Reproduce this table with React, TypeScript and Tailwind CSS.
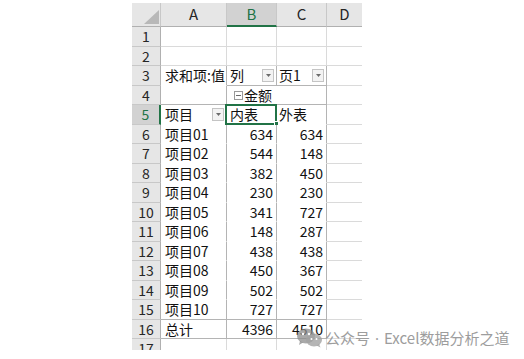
import type { ReactNode } from 'react'

const GRID = 'border-r border-b border-[#dadada]'
const PV_IN = 'border-r border-b border-r-[#b4b4b4] border-b-white'
const PV_BOT = 'border-r border-b border-r-[#b4b4b4] border-b-[#b4b4b4]'

type Row = {
  n: number
  h: string
  a?: ReactNode
  b?: ReactNode
  c?: ReactNode
  ca: string
  cb: string
  cc: string
}

const items: [string, number, number][] = [
  ['项目01', 634, 634],
  ['项目02', 544, 148],
  ['项目03', 382, 450],
  ['项目04', 230, 230],
  ['项目05', 341, 727],
  ['项目06', 148, 287],
  ['项目07', 438, 438],
  ['项目08', 450, 367],
  ['项目09', 502, 502],
  ['项目10', 727, 727],
]

function Drop() {
  return (
    <span className="ml-auto mr-[2px] flex h-[13px] w-[12px] items-center justify-center border border-[#c4c4c4] bg-[#f3f3f3]">
      <svg width="5" height="3" viewBox="0 0 5 3">
        <path d="M0 0h5L2.5 3z" fill="#6b6b6b" />
      </svg>
    </span>
  )
}

function Num({ v }: { v: number }) {
  return <span className="ml-auto pr-[3px]">{v}</span>
}

const rows: Row[] = [
  { n: 1, h: 'h-[20px]', ca: GRID, cb: GRID, cc: GRID },
  { n: 2, h: 'h-[19px]', ca: GRID, cb: GRID, cc: GRID },
  {
    n: 3,
    h: 'h-[20px]',
    a: <span className="pl-[4px]">求和项:值</span>,
    b: (
      <>
        <span className="pl-[3px]">列</span>
        <Drop />
      </>
    ),
    c: (
      <>
        <span className="pl-[2px]">页1</span>
        <Drop />
      </>
    ),
    ca: PV_IN,
    cb: PV_BOT,
    cc: PV_BOT,
  },
  {
    n: 4,
    h: 'h-[19px]',
    b: (
      <span className="flex items-center pl-[7px]">
        <svg width="9" height="9" viewBox="0 0 9 9" className="mr-[1px]">
          <rect x="0.5" y="0.5" width="8" height="8" fill="white" stroke="#9a9a9a" />
          <path d="M2 4.5h5" stroke="#6b6b6b" />
        </svg>
        金额
      </span>
    ),
    ca: PV_BOT,
    cb: 'border-r border-b border-r-white border-b-[#b4b4b4]',
    cc: PV_BOT,
  },
  {
    n: 5,
    h: 'h-[20px]',
    a: (
      <>
        <span className="pl-[4px]">项目</span>
        <Drop />
      </>
    ),
    b: <span className="pl-[3px]">内表</span>,
    c: <span className="pl-[2px]">外表</span>,
    ca: PV_IN,
    cb: PV_IN,
    cc: PV_IN,
  },
  ...items.map(([name, x, y], i): Row => ({
    n: i + 6,
    h: i % 2 === 0 ? 'h-[19px]' : 'h-[20px]',
    a: <span className="pl-[4px]">{name}</span>,
    b: <Num v={x} />,
    c: <Num v={y} />,
    ca: i === 9 ? PV_BOT : PV_IN,
    cb: i === 9 ? PV_BOT : PV_IN,
    cc: i === 9 ? PV_BOT : PV_IN,
  })),
  {
    n: 16,
    h: 'h-[19px]',
    a: <span className="pl-[4px]">总计</span>,
    b: <Num v={4396} />,
    c: <Num v={4510} />,
    ca: PV_BOT,
    cb: PV_BOT,
    cc: PV_BOT,
  },
  { n: 17, h: 'h-[20px]', ca: GRID, cb: GRID, cc: GRID },
]

function WeChat() {
  return (
    <svg width="28" height="20" viewBox="0 0 28 20">
      <ellipse cx="10" cy="8" rx="9" ry="7.5" fill="#8c8c8c" opacity="0.75" />
      <path d="M4 13l-1 4 4-2.5z" fill="#8c8c8c" opacity="0.75" />
      <ellipse cx="18" cy="12" rx="8" ry="6.5" fill="#a3a3a3" opacity="0.8" />
      <path d="M23 16l1.5 3.5-4-2z" fill="#a3a3a3" opacity="0.8" />
      <circle cx="7" cy="6" r="1.2" fill="white" />
      <circle cx="13" cy="6" r="1.2" fill="white" />
      <circle cx="15.5" cy="11" r="1" fill="white" />
      <circle cx="20.5" cy="11" r="1" fill="white" />
    </svg>
  )
}

export default function App() {
  return (
    <div
      className="relative h-[359px] w-[524px] overflow-hidden bg-white pl-[132px] pt-[3px] text-[14px] text-[#111]"
      style={{ fontFamily: '"Noto Sans CJK SC", "Noto Sans", sans-serif' }}
    >
      <div className="h-[347px] w-[230px] overflow-hidden">
        {/* column headers */}
        <div className="flex h-[24px] text-[15px] text-[#262626]">
          <div className="relative w-[29px] border-r border-b border-r-[#c8c8c8] border-b-[#b0b0b0] bg-[#e6e6e6]">
            <svg width="15" height="14" viewBox="0 0 15 14" className="absolute right-[1px] bottom-[2px]">
              <path d="M15 0V14H0z" fill="#b8b8b8" />
            </svg>
          </div>
          <div className="flex w-[66px] items-center justify-center border-r border-b border-r-[#c8c8c8] border-b-[#b0b0b0] bg-[#e6e6e6]">A</div>
          <div className="flex w-[50px] items-center justify-center border-r border-b-2 border-r-[#c8c8c8] border-b-[#217346] bg-[#d2d2d2] text-[#217346]">B</div>
          <div className="flex w-[50px] items-center justify-center border-r border-b border-r-[#c8c8c8] border-b-[#b0b0b0] bg-[#e6e6e6]">C</div>
          <div className="flex w-[35px] items-center justify-center border-b border-b-[#b0b0b0] bg-[#e6e6e6]">D</div>
        </div>

        {rows.map((r) => (
          <div key={r.n} className={`flex ${r.h}`}>
            <div
              className={
                r.n === 5
                  ? 'flex w-[29px] items-center justify-center border-r-2 border-b border-r-[#217346] border-b-[#c8c8c8] bg-[#d2d2d2] text-[#217346]'
                  : 'flex w-[29px] items-center justify-center border-r border-b border-r-[#b0b0b0] border-b-[#c8c8c8] bg-[#e6e6e6] text-[#262626]'
              }
            >
              {r.n}
            </div>
            <div className={`flex w-[66px] items-center ${r.ca}`}>{r.a}</div>
            <div className={`relative flex w-[50px] items-center ${r.cb}`}>
              {r.b}
              {r.n === 5 && (
                <>
                  <div className="absolute -top-[1px] -left-[2px] h-[21px] w-[52px] border-2 border-[#217346]" />
                  <div className="absolute -right-[3px] -bottom-[2px] h-[5px] w-[5px] border border-white bg-[#217346]" />
                </>
              )}
            </div>
            <div className={`flex w-[50px] items-center ${r.cc}`}>{r.c}</div>
            <div className={`w-[35px] ${GRID} border-r-0`} />
          </div>
        ))}
      </div>

      {/* watermark */}
      <div className="absolute top-[327px] left-[296px] flex items-center text-[15px] text-[#9d9d9d]">
        <WeChat />
        <span className="ml-[1px]">公众号</span>
        <span className="mx-[5px] font-['Noto_Sans']">·</span>
        <span>Excel数据分析之道</span>
      </div>
    </div>
  )
}
